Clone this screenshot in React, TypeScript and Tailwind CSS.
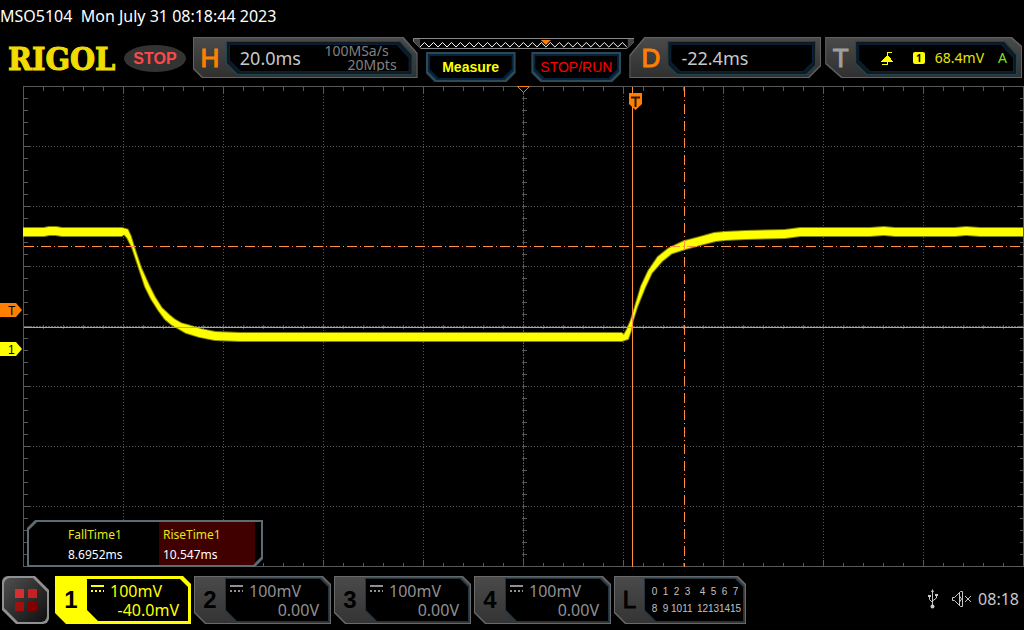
import type { ReactNode } from 'react';
import clsx from 'clsx';

const CUT_H = '[clip-path:polygon(0_0,calc(100%_-_14px)_0,100%_16px,100%_100%,9px_100%,0_calc(100%_-_9px))]';
const CUT_D = '[clip-path:polygon(15px_0,100%_0,100%_calc(100%_-_12px),calc(100%_-_12px)_100%,0_100%,0_18px)]';
const CUT_T = '[clip-path:polygon(0_0,calc(100%_-_10px)_0,100%_9px,100%_100%,16px_100%,0_calc(100%_-_14px))]';
const CUT_WELL = '[clip-path:polygon(0_0,calc(100%_-_12px)_0,100%_13px,100%_100%,11px_100%,0_calc(100%_-_11px))]';
const CUT_BOTTOM = '[clip-path:polygon(0_0,100%_0,100%_calc(100%_-_9px),calc(100%_-_9px)_100%,9px_100%,0_calc(100%_-_9px))]';
const CUT_CHANNEL = '[clip-path:polygon(0_0,calc(100%_-_8px)_0,100%_8px,100%_100%,11px_100%,0_calc(100%_-_11px))]';
const CUT_RESULTS = '[clip-path:polygon(8px_0,100%_0,100%_calc(100%_-_8px),calc(100%_-_8px)_100%,0_100%,0_8px)]';
const CUT_MENU = '[clip-path:polygon(0_0,calc(100%_-_14px)_0,100%_14px,100%_100%,14px_100%,0_calc(100%_-_14px))]';

const CURSOR = '#ff9040';
const GRID = '#585858';

// centre line of the trace: x, y, half thickness
const trace: [number, number, number][] = [
  [23, 232, 4], [44, 232, 4], [49, 231, 4], [56, 231, 4], [62, 232, 4], [122, 232, 4],
  [126, 232, 3], [129, 237, 2], [133, 247, 1], [140, 268, 1], [147, 286, 2], [153, 298, 2],
  [160, 309, 2], [167, 317, 3], [173, 322, 3], [180, 326, 3], [187, 329, 4], [200, 333, 4],
  [215, 336, 4], [240, 337, 4], [420, 337, 4], [622, 337, 4], [626, 337, 3], [629, 330, 2],
  [632, 320, 1], [636, 307, 1], [643, 287, 2], [650, 272, 2], [660, 259, 3], [670, 251, 3],
  [685, 245, 4], [700, 241, 4], [715, 237, 4], [725, 236, 4], [745, 235, 4], [785, 234, 4],
  [800, 232, 4], [870, 232, 4], [884, 231, 4], [895, 232, 4], [955, 232, 4], [966, 231, 4],
  [980, 232, 4], [1023, 232, 4],
];

function tracePolygon(extra: number) {
  const upper: string[] = [];
  const lower: string[] = [];
  trace.forEach(([x, y, half], i) => {
    const before = trace[Math.max(i - 1, 0)];
    const after = trace[Math.min(i + 1, trace.length - 1)];
    const dx = after[0] - before[0];
    const dy = after[1] - before[1];
    const length = Math.hypot(dx, dy);
    const nx = (-dy / length) * (half + extra);
    const ny = (dx / length) * (half + extra);
    upper.push(`${x - nx},${y - ny}`);
    lower.unshift(`${x + nx},${y + ny}`);
  });
  return [...upper, ...lower].join(' ');
}

function Well({ cut, className, children }: { cut: string; className?: string; children: ReactNode }) {
  return (
    <div className={clsx('flex bg-[#1f4451] p-px', cut, className)}>
      <div className={clsx('flex flex-1 bg-[#12181c] p-0.5', cut)}>
        <div className={clsx('flex flex-1 bg-[#06223c] p-px', cut)}>
          <div className={clsx('flex flex-1 items-center bg-black', cut)}>{children}</div>
        </div>
      </div>
    </div>
  );
}

function Panel({ cut, className, children }: { cut: string; className?: string; children: ReactNode }) {
  return (
    <section className={clsx('flex h-[41px] bg-[#626262] p-px', cut, className)}>
      <div className={clsx('flex flex-1 bg-linear-to-b from-[#4a4a4a] to-[#303030] pt-[3px] pb-0.5', cut)}>
        {children}
      </div>
    </section>
  );
}

function MemoryBar() {
  const points = [];
  for (let i = 0; i <= 46; i++) {
    points.push(`${7 + i * 4.5},${i % 2 ? 5.5 : 10}`);
  }
  return (
    <svg viewBox="0 0 222 13" className="h-[13px] w-full" aria-hidden="true">
      <path d="M0.5 1.5H221.5V4.5L214 11.5H8L0.5 4.5Z" fill="#000" stroke="#8a8a8a" />
      <path d="M1 2H7V10L1 5Z" fill="#444" />
      <path d="M221 2H215V10L221 5Z" fill="#444" />
      <polyline points={points.join(' ')} fill="none" stroke="#fff" />
      <path d="M128 3H138L133 8Z" fill="#ff8000" />
    </svg>
  );
}

function Graticule() {
  const columns = Array.from({ length: 9 }, (_, i) => 123 + i * 100);
  const rows = Array.from({ length: 7 }, (_, i) => 146 + i * 60);
  const ticksX = Array.from({ length: 51 }, (_, i) => 23 + i * 20);
  const ticksY = Array.from({ length: 41 }, (_, i) => 86 + i * 12);
  return (
    <g stroke={GRID} fill="none" shapeRendering="crispEdges" transform="translate(0.5 0.5)">
      {columns.map((x) => (
        <path key={x} d={`M${x} 86V566`} strokeDasharray={x === 523 ? '2 1' : '1 2'} />
      ))}
      {rows.map((y) => (
        <path key={y} d={`M23 ${y}H1023`} strokeDasharray={y === 326 ? '2 1' : '1 2'} />
      ))}
      {ticksX.map((x, i) => {
        const size = i % 5 ? 4 : 7;
        return <path key={x} d={`M${x} 86v${size}M${x} 566v-${size}M${x} 324v4`} />;
      })}
      {ticksY.map((y, i) => {
        const size = i % 5 ? 4 : 7;
        return <path key={y} d={`M23 ${y}h${size}M1023 ${y}h-${size}M521 ${y}h5`} />;
      })}
      <path d="M23 86H1023V566H23Z" />
    </g>
  );
}

function Display() {
  return (
    <svg
      viewBox="0 86 1024 481"
      className="block w-full font-['Liberation_Sans',sans-serif]"
      role="img"
      aria-label="Channel 1 waveform"
    >
      <Graticule />
      <polygon points={tracePolygon(1)} fill="#ffff00" opacity="0.5" />
      <polygon points={tracePolygon(0)} fill="#ffff00" />

      <g stroke={CURSOR} shapeRendering="crispEdges" transform="translate(0.5 0.5)">
        <path d="M23 327H1023" />
        <path d="M632 86V566" />
        <path d="M23 246H1023" strokeDasharray="10 3 1 3" />
        <path d="M684 86V566" strokeDasharray="10 3 1 3" />
      </g>

      <path d="M517.5 86.5H529.5L523.5 92.5Z" fill="#000" stroke="#ff8000" />
      <path d="M629 93H642V104L635.5 110L629 104Z" fill="#ff8000" />
      <path d="M631 97.5H640M635.5 97V107" stroke="#2a1800" strokeWidth="2" />
      <path d="M0 303H16L22 310L16 317H0Z" fill="#ff8000" />
      <text x="8" y="315" fontSize="12" fill="#000">T</text>
      <path d="M0 342H16L22 349L16 356H0Z" fill="#ffff00" />
      <text x="8" y="354" fontSize="12" fill="#000">1</text>
    </svg>
  );
}

function Results() {
  return (
    <div className={clsx('absolute bottom-0 left-[27px] bg-[#5c6c74] p-0.5', CUT_RESULTS)}>
      <div className={clsx('bg-black pr-[6px]', CUT_RESULTS)}>
        <table className="text-left text-xs leading-5">
          <thead className="text-[#e6e619]">
            <tr>
              <th className="w-[130px] pt-[3px] pl-[39px] font-normal">FallTime1</th>
              <th className="w-24 bg-[#400000] pt-[3px] pl-1 font-normal">RiseTime1</th>
            </tr>
          </thead>
          <tbody className="text-white">
            <tr>
              <td className="pl-[39px]">8.6952ms</td>
              <td className="bg-[#400000] pl-1">10.547ms</td>
            </tr>
          </tbody>
        </table>
      </div>
    </div>
  );
}

function Coupling() {
  return (
    <svg viewBox="0 0 14 8" className="h-2 w-3.5" shapeRendering="crispEdges" aria-label="DC">
      <path d="M0 1H13" stroke="currentColor" strokeWidth="2" />
      <path d="M0 6H13" stroke="currentColor" strokeWidth="2" strokeDasharray="2 2" />
    </svg>
  );
}

function Channel({ id, scale, offset, active }: { id: number; scale: string; offset: string; active?: boolean }) {
  return (
    <button
      className={clsx(
        'flex h-12 p-px text-left text-base leading-[19px]',
        CUT_CHANNEL,
        active ? 'w-[136px] bg-[#ffff00] text-[#ffff00]' : 'w-[137px] bg-[#6a6a6a] text-[#909090]'
      )}
    >
      <span
        className={clsx(
          'flex h-full flex-1 py-px pr-px',
          CUT_CHANNEL,
          active ? 'bg-[#ffff00]' : 'bg-linear-to-b from-[#4a4a4a] to-[#343434]'
        )}
      >
        <span className="flex w-[30px] items-center justify-center font-['Liberation_Sans',sans-serif] text-2xl font-bold text-black">
          {id}
        </span>
        <span className={clsx('flex-1 p-px', CUT_CHANNEL, active ? 'bg-[#ffff00]' : 'bg-[#203442]')}>
          <span className={clsx('block h-full bg-black pt-[3px] pl-1', CUT_CHANNEL)}>
            <span className="flex items-start gap-[5px]">
              <span className="pt-[3px]"><Coupling /></span>
              <span>{scale}</span>
            </span>
            <span className="block pr-[9px] text-right">{offset}</span>
          </span>
        </span>
      </span>
    </button>
  );
}

function Logic() {
  return (
    <button className={clsx('flex h-12 w-[132px] bg-[#6a6a6a] p-px', CUT_CHANNEL)}>
      <span className={clsx('flex h-full flex-1 bg-linear-to-b from-[#4a4a4a] to-[#343434] py-px pr-px', CUT_CHANNEL)}>
        <span className="flex w-[29px] items-center justify-center font-['Liberation_Sans',sans-serif] text-2xl text-black [-webkit-text-stroke:1px_#000]">
          L
        </span>
        <span className={clsx('flex-1 bg-[#203442] p-px', CUT_CHANNEL)}>
          <span
            className={clsx(
              "flex h-full items-center gap-1 bg-black pl-1 text-center font-['Liberation_Sans',sans-serif] text-[10px] leading-[17px] text-[#c0c0c0]",
              CUT_CHANNEL
            )}
          >
            {[0, 4].map((first) => (
              <span key={first} className="grid grid-cols-[repeat(4,11px)] justify-items-center">
                {[0, 1, 2, 3, 8, 9, 10, 11].map((i) => (
                  <span key={i}>{first + i}</span>
                ))}
              </span>
            ))}
          </span>
        </span>
      </span>
    </button>
  );
}

const softKeyClass = "h-[30px] bg-[#2c4a55] p-0.5 font-['Liberation_Sans',sans-serif] text-sm";

export default function App() {
  return (
    <div className="flex min-h-screen flex-col bg-black font-['Noto_Sans','Open_Sans',sans-serif]">
      <header>
        <h1 className="h-[37px] pt-1 text-base leading-6 whitespace-pre text-white">
          MSO5104  Mon July 31 08:18:44 2023
        </h1>

        <div className="flex h-[49px] items-start">
          <div className="flex h-[42px] w-[193px] items-center gap-1.5 pl-2">
            <span className="w-[110px] pt-0.5 font-['DejaVu_Serif_Condensed','DejaVu_Serif',serif] text-[32px] leading-[42px] font-bold text-[#f0dc00] [-webkit-text-stroke:1px_#f0dc00]">
              RIGOL
            </span>
            <span className="flex h-[27px] w-[62px] items-center justify-center rounded-[50%] bg-[#333] pt-0.5 font-['Liberation_Sans',sans-serif] text-base font-bold text-[#ff4848]">
              STOP
            </span>
          </div>

          <Panel cut={CUT_H} className="grow basis-[225px]">
            <span className="flex w-8 items-center justify-center font-['Liberation_Sans',sans-serif] text-[26px] text-[#ff8000] [-webkit-text-stroke:1px_#ff8000]">
              H
            </span>
            <Well cut={CUT_WELL} className="mr-1 flex-1">
              <span className="flex-1 pl-2.5 text-lg text-[#c8c8c8]">20.0ms</span>
              <span className="pr-3 text-right text-sm leading-[14px] text-[#808080]">
                <span className="block pr-2">100MSa/s</span>
                <span className="block">20Mpts</span>
              </span>
            </Well>
          </Panel>

          <div className="relative z-10 -mx-[5px] w-[222px]">
            <MemoryBar />
            <div className="mt-0.5 flex justify-between px-[13px]">
              <button className={clsx(softKeyClass, CUT_BOTTOM, 'w-[90px] font-bold text-[#ffff00]')}>
                <span className={clsx('block h-full bg-[#06223c] p-0.5', CUT_BOTTOM)}>
                  <span className={clsx('flex h-full items-center justify-center bg-black', CUT_BOTTOM)}>Measure</span>
                </span>
              </button>
              <button className={clsx(softKeyClass, CUT_BOTTOM, 'w-[90px] text-[#ff0000]')}>
                <span className={clsx('block h-full bg-[#06223c] p-0.5', CUT_BOTTOM)}>
                  <span className={clsx('flex h-full items-center justify-center bg-black', CUT_BOTTOM)}>STOP/RUN</span>
                </span>
              </button>
            </div>
          </div>

          <Panel cut={CUT_D} className="mr-1 grow basis-[192px]">
            <span className="flex w-[37px] items-center justify-center pl-1 font-['Liberation_Sans',sans-serif] text-[26px] text-[#ff8000] [-webkit-text-stroke:1px_#ff8000]">
              D
            </span>
            <Well cut={CUT_BOTTOM} className="mr-1 flex-1">
              <span className="pl-2.5 text-lg text-[#c8c8c8]">-22.4ms</span>
            </Well>
          </Panel>

          <Panel cut={CUT_T} className="mr-0.5 grow basis-[197px]">
            <span className="flex w-[29px] items-center justify-center font-['Liberation_Sans',sans-serif] text-[26px] text-[#a0a0a0] [-webkit-text-stroke:1px_#a0a0a0]">
              T
            </span>
            <Well cut={CUT_WELL} className="mr-1 flex-1">
              <span className="flex flex-1 items-center justify-end pr-1.5 text-sm text-[#e6e600]">
                <svg viewBox="0 0 12 13" className="mr-5 h-[13px] w-3" shapeRendering="crispEdges" aria-label="Rising edge">
                  <path d="M1 12.500H6.500V0.500H11" fill="none" stroke="#ffff00" />
                  <path d="M0 9.500L6 3H7L12 9.500Z" fill="#ffff00" />
                </svg>
                <span className="mr-2.5 flex h-3 w-3 items-center justify-center rounded-xs bg-[#ffff00] text-[10px] leading-3 font-bold text-black">
                  1
                </span>
                <span>68.4mV</span>
                <span className="ml-3.5 text-[#80e020]">A</span>
              </span>
            </Well>
          </Panel>
        </div>
      </header>

      <main className="relative">
        <Display />
        <Results />
      </main>

      <footer className="flex items-start pt-[9px] pl-0.5">
        <button aria-label="Menu" className={clsx('mr-1.5 h-12 w-[47px] rounded-md bg-[#909090] p-0.5', CUT_MENU)}>
          <span
            className={clsx(
              'grid h-full grid-cols-[9px_9px] place-content-center gap-1 rounded-md bg-linear-to-br from-[#505050] to-[#101010]',
              CUT_MENU
            )}
          >
            <span className="h-[9px] bg-[#d83030]" />
            <span className="h-[9px] bg-[#c82020]" />
            <span className="h-[9px] bg-[#a01010]" />
            <span className="h-[9px] bg-[#800000]" />
          </span>
        </button>
        <div className="flex gap-[3px]">
          <Channel id={1} scale="100mV" offset="-40.0mV" active />
          <Channel id={2} scale="100mV" offset="0.00V" />
          <Channel id={3} scale="100mV" offset="0.00V" />
          <Channel id={4} scale="100mV" offset="0.00V" />
          <Logic />
        </div>
        <div className="ml-auto flex h-[46px] items-center pr-[5px] text-base text-[#c8c8c8]">
          <svg viewBox="0 0 10 20" className="mr-3.5 h-5 w-2.5" fill="none" stroke="currentColor" aria-label="USB">
            <path d="M4.500 2V17M1.500 7V10.500L4.500 13.500M8.500 6V9L4.500 12" />
            <path d="M4.500 0L3 3H6Z" fill="currentColor" stroke="none" />
            <path d="M0 6h3v2H0zM7 5h3v2H7z" fill="currentColor" stroke="none" />
            <circle cx="4.500" cy="17.500" r="2" fill="currentColor" stroke="none" />
          </svg>
          <svg viewBox="0 0 20 18" className="mr-1.5 h-[18px] w-5" fill="none" stroke="currentColor" aria-label="Muted">
            <path d="M0.500 7.500V10.500H2.500L8.500 16.500H10.500V1.500H8.500L2.500 7.500Z" />
            <path d="M7.500 2V16M7.500 6L9.500 9L7.500 12" />
            <path d="M13 6L19 12M19 6L13 12" />
          </svg>
          <time>08:18</time>
        </div>
      </footer>
    </div>
  );
}
